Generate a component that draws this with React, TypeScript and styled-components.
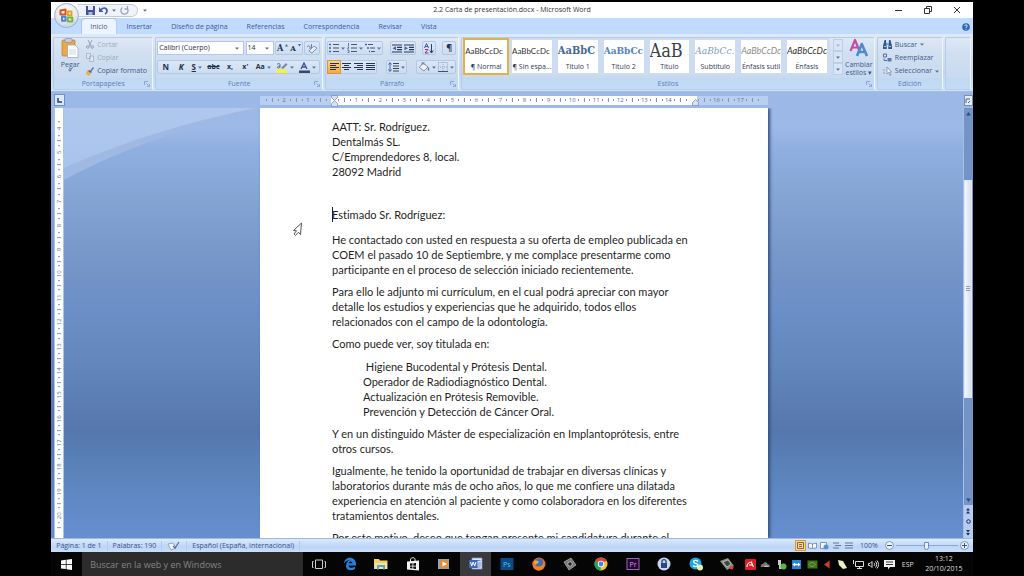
import React from 'react';
import styled, { createGlobalStyle, css } from 'styled-components';

const ui = '"Open Sans", "Noto Sans", sans-serif';
const body = 'Lato, "Open Sans", sans-serif';
const serif = '"DejaVu Serif Condensed", "DejaVu Serif", serif';

const Global = createGlobalStyle`
  * { box-sizing: border-box; }
  body { margin: 0; background: #000; font-family: ${ui}; }
  button, input, select { font: inherit; color: inherit; margin: 0; padding: 0; border: 0; background: none; }
  svg { display: block; flex: none; }
`;

const Desktop = styled.div`
  height: 100vh;
  padding: 2px 5% 0;
  display: flex;
  flex-direction: column;
  background: #000;
  overflow: hidden;
`;

const WordWindow = styled.main`
  position: relative;
  flex: 1;
  min-height: 0;
  display: flex;
  flex-direction: column;
  background: #bdd6fa;
  font-size: 7px;
  line-height: 10px;
  white-space: nowrap;
`;

/* ---------- title bar ---------- */
const TitleBar = styled.header`
  height: 16px;
  display: grid;
  grid-template-columns: 1fr auto 1fr;
  align-items: center;
  background: #fff;
  color: #333;
`;
const QuickAccess = styled.div`
  display: flex;
  align-items: center;
  padding-left: 26px;
  gap: 5px;
`;
const Pill = styled.div`
  display: flex;
  align-items: center;
  gap: 4px;
  height: 13px;
  padding: 0 8px;
  border: 1px solid #c3cbd8;
  border-left-color: #fff;
  border-radius: 0 7px 7px 0;
  background: #f0f4fa;
`;
const Plain = styled.button`
  display: flex;
  align-items: center;
  justify-content: center;
`;
const WindowTitle = styled.h1`
  margin: 0;
  font-size: 7px;
  font-weight: 400;
`;
const WindowButtons = styled.div`
  display: flex;
  justify-content: flex-end;
  align-items: center;
  gap: 21px;
  padding-right: 12px;
`;
const OfficeButton = styled.button`
  position: absolute;
  left: 3px;
  top: 1px;
  width: 25px;
  height: 25px;
  display: flex;
  align-items: center;
  justify-content: center;
  border: 1px solid #9fb0c9;
  border-radius: 50%;
  background: radial-gradient(circle at 50% 30%, #fff 0, #e6ebf3 50%, #b7c4d8 100%);
  z-index: 2;
`;

/* ---------- ribbon ---------- */
const TabBar = styled.nav`
  height: 16px;
  display: flex;
  align-items: flex-end;
  gap: 3px;
  padding: 0 3px 0 31px;
  background: #bfdbff;
`;
const Tab = styled.button<{ $active?: boolean }>`
  height: 15px;
  padding: 0 8px;
  color: #3e5c8f;
  border-radius: 3px 3px 0 0;
  ${p => p.$active && css`
    background: #eef4fd;
    box-shadow: 0 0 0 1px #a5c2ea;
    clip-path: inset(-1px -1px 0 -1px);
  `}
`;
const HelpButton = styled(Plain)`
  margin-left: auto;
  height: 15px;
`;
const Ribbon = styled.section`
  height: 58px;
  display: flex;
  gap: 2px;
  padding: 3px 2px 1px 2px;
  background: linear-gradient(#dfe9f7 0, #d2e1f4 30%, #c3d8f1 70%, #cfe3fa 100%);
  border-bottom: 1px solid #9fbfdc;
`;
const Group = styled.section<{ $w?: number }>`
  display: flex;
  flex-direction: column;
  ${p => (p.$w ? css`flex: 0 0 ${p.$w}px;` : css`flex: 1;`)}
  min-width: 0;
  border: 1px solid #b5cbe8;
  border-right-color: #eef5fd;
  border-radius: 2px;
  background: linear-gradient(#dee8f5 0, #d1dff1 30%, #c8daf0 78%, #c1d8f1 79%, #c3dcf8 100%);
`;
const GroupBody = styled.div`
  flex: 1;
  display: flex;
  min-height: 0;
`;
const GroupLabel = styled.footer`
  height: 11px;
  display: grid;
  grid-template-columns: 8px 1fr 8px;
  align-items: center;
  text-align: center;
  color: #5c7fb5;
`;
const BigButton = styled.button<{ $w: number }>`
  width: ${p => p.$w}px;
  display: flex;
  flex-direction: column;
  align-items: center;
  color: #3b5a8c;
  line-height: 8px;
  svg:first-child { margin-bottom: 3px; }
`;
const CommandList = styled.div<{ $pad?: number }>`
  display: flex;
  flex-direction: column;
  padding-left: ${p => p.$pad || 0}px;
`;
const Command = styled.button<{ $off?: boolean }>`
  height: 14px;
  display: flex;
  align-items: center;
  gap: 3px;
  color: ${p => (p.$off ? '#9fabbd' : '#3b5a8c')};
`;
const ToolRows = styled.div`
  flex: 1;
  display: flex;
  flex-direction: column;
  gap: 5px;
  padding: 3px 2px 0 1px;
`;
const ToolRow = styled.div`
  display: flex;
  justify-content: space-between;
  height: 14px;
`;
const Cluster = styled.div<{ $grow?: boolean }>`
  ${p => p.$grow && 'flex: 1;'}
  display: flex;
  align-items: stretch;
  justify-content: space-around;
  border: 1px solid #b3c8e6;
  border-radius: 2px;
  background: linear-gradient(#dce7f6, #cbdcf2);
`;
const Tool = styled.button<{ $on?: boolean }>`
  min-width: 12px;
  padding: 0 1px;
  display: flex;
  align-items: center;
  justify-content: center;
  gap: 2px;
  color: #25324a;
  ${p => p.$on && 'background: linear-gradient(#fcd28a, #f8a93c); box-shadow: 0 0 0 1px #d09a4c;'}
`;
const Glyph = styled.span<{ $b?: boolean; $i?: boolean; $u?: boolean; $s?: boolean; $serif?: boolean; $size?: number }>`
  font-family: ${p => (p.$serif ? serif : ui)};
  font-size: ${p => p.$size || 8}px;
  font-weight: ${p => (p.$b ? 700 : 400)};
  font-style: ${p => (p.$i ? 'italic' : 'normal')};
  text-decoration: ${p => (p.$u ? 'underline' : p.$s ? 'line-through' : 'none')};
`;
const Combo = styled.label<{ $w: number }>`
  width: ${p => p.$w}px;
  display: flex;
  align-items: center;
  padding: 0 4px 0 1px;
  background: #fbfdff;
  border: 1px solid #b3c8e6;
  color: #333;
`;
const Select = styled.select`
  appearance: none;
  flex: 1;
  min-width: 0;
  height: 12px;
  outline: 0;
`;

const Gallery = styled.div`
  flex: 1;
  display: grid;
  grid-template-columns: repeat(8, 1fr);
  padding: 0 0 0 1px;
  min-width: 0;
`;
const StyleCard = styled.button<{ $on?: boolean }>`
  display: flex;
  flex-direction: column;
  align-items: center;
  height: 37px;
  min-width: 0;
  overflow: hidden;
  background: #fff;
  color: #333a55;
  border: 2px solid ${p => (p.$on ? '#e4b04a' : '#cddcf1')};
  border-left-width: ${p => (p.$on ? 2 : 3)}px;
  border-right-width: ${p => (p.$on ? 2 : 3)}px;
`;
const Sample = styled.span<{ $font?: string; $size: number; $color?: string; $b?: boolean; $i?: boolean }>`
  display: flex;
  align-items: center;
  align-self: stretch;
  height: 22px;
  overflow: hidden;
  font-family: ${p => p.$font || body};
  font-size: ${p => p.$size}px;
  color: ${p => p.$color || '#333'};
  font-weight: ${p => (p.$b ? 700 : 400)};
  font-style: ${p => (p.$i ? 'italic' : 'normal')};
`;
const GalleryScroll = styled.div`
  width: 10px;
  margin: 1px 1px 0 3px;
  display: grid;
  grid-template-rows: repeat(3, 12px);
`;
const ScrollStep = styled(Plain)`
  border: 1px solid #bccfea;
  background: #d9e5f5;
`;

/* ---------- workspace ---------- */
const Workspace = styled.section`
  position: relative;
  flex: 1;
  min-height: 0;
  display: grid;
  grid-template-columns: 14px 1fr 10px;
  grid-template-rows: 16px 1fr;
  background: linear-gradient(#9bb8e6 0, #9db9e7 8%, #8fafe0 13%, #83a3d3 25%, #7493c6 41%, #6e91c9 46%, #6285bc 62%, #5577ae 76%, #5b83ba 85%, #678fd0 100%);
  overflow: hidden;
`;
const Swoosh = styled.svg`
  position: absolute;
  left: 13px;
  top: 16px;
`;
const TabSelector = styled(Plain)`
  margin: 2px 0 2px 3px;
  width: 11px;
  border: 1px solid #6d92cf;
  background: #dce9fb;
`;
const RulerTrack = styled.div`
  display: flex;
  justify-content: center;
  align-items: center;
`;
const Ruler = styled.div`
  position: relative;
  width: 508px;
  height: 9px;
  display: flex;
  padding-left: 3px;
  background: linear-gradient(90deg, #b9cff2 14%, #fff 14%, #fff 86%, #b9cff2 86%);
  color: #5a6f93;
  font-size: 6px;
  line-height: 9px;
`;
const RulerCell = styled.div`
  flex: 1;
  min-width: 0;
  display: grid;
  grid-template-columns: repeat(4, 1fr);
  justify-items: center;
  align-items: center;
`;
const Mark = styled.i<{ $long?: boolean }>`
  width: 1px;
  height: ${p => (p.$long ? 4 : 2)}px;
  background: #8396b8;
`;
const Indent = styled.svg<{ $right?: boolean }>`
  position: absolute;
  top: ${p => (p.$right ? 3 : -1)}px;
  left: ${p => (p.$right ? '85%' : '14%')};
`;
const SideRuler = styled.div`
  margin: 0 1px 0 3px;
  padding: 9px 0 10px;
  display: flex;
  flex-direction: column;
  background: #fff;
  border-left: 1px solid #a9c3ec;
  border-right: 1px solid #a9c3ec;
  color: #5a6f93;
  font-size: 6px;
  z-index: 1;
`;
const SideCell = styled.div`
  flex: 1;
  min-height: 0;
  display: flex;
  align-items: center;
  justify-content: space-between;
  writing-mode: vertical-rl;
  transform: rotate(180deg);
`;
const SideMark = styled.i<{ $long?: boolean }>`
  width: ${p => (p.$long ? 4 : 2)}px;
  height: 1px;
  background: #8396b8;
`;
const PageArea = styled.div`
  display: flex;
  justify-content: center;
  min-height: 0;
  overflow: hidden;
  z-index: 1;
`;
const Page = styled.article`
  width: 508px;
  max-width: 100%;
  padding: 11px 60px 0 72px;
  background: #fff;
  box-shadow: 2px 0 3px #33507f;
  color: #1f1f1f;
  font-family: ${body};
  font-size: 11px;
  font-variant-ligatures: none;
  line-height: 15px;
`;
const Para = styled.p<{ $gap?: number; $indent?: boolean }>`
  margin: 0 0 ${p => p.$gap || 7}px;
  padding-left: ${p => (p.$indent ? 31 : 0)}px;
`;
const Caret = styled.i`
  position: absolute;
  width: 1px;
  height: 15px;
  background: #102040;
`;
const Pointer = styled.svg`
  position: absolute;
  left: 241px;
  top: 130px;
  z-index: 2;
`;
const ScrollHead = styled(Plain)`
  margin: 3px 0 2px 1px;
  background: #e4ecf9;
  border: 1px solid #7b8fb3;
`;
const ScrollBar = styled.div`
  display: flex;
  flex-direction: column;
  border-left: 1px solid #a3bfeb;
  background: #7494c6;
  z-index: 1;
`;
const ScrollButton = styled(Plain)<{ $light?: boolean }>`
  height: 11px;
  ${p => p.$light && 'background: #b6cdf0;'}
`;
const Thumb = styled.div`
  flex: 217;
  margin: 0 1px 0 0;
  display: flex;
  align-items: center;
  justify-content: center;
  background: linear-gradient(90deg, #f4f6fb, #d7dfec);
  border: 1px solid #dfe7f3;
`;
const Track = styled.div<{ $flex: number }>`
  flex: ${p => p.$flex};
`;

/* ---------- status bar ---------- */
const StatusBar = styled.footer`
  height: 14px;
  display: flex;
  align-items: center;
  padding: 0 2px 0 5px;
  color: #35548a;
  border-top: 1px solid #9db9de;
  background: linear-gradient(#dbe9fc, #bdd5f6 60%, #c9defa);
`;
const StatusItem = styled.span`
  padding-right: 5px;
  margin-right: 5px;
  border-right: 1px solid #b4cbec;
`;
const ViewButtons = styled.div`
  margin-left: auto;
  display: flex;
  gap: 1px;
  padding-right: 6px;
`;
const ViewButton = styled(Plain)<{ $on?: boolean }>`
  width: 11px;
  height: 11px;
  ${p => p.$on && 'background: #fbd491; box-shadow: inset 0 0 0 1px #d49b45;'}
`;
const ZoomLabel = styled.span`
  padding-right: 5px;
`;
const Zoom = styled.input`
  appearance: none;
  width: 62px;
  height: 9px;
  background: linear-gradient(#0000 4px, #8fa9d0 4px, #8fa9d0 5px, #0000 5px);
  &::-webkit-slider-thumb {
    appearance: none;
    width: 5px;
    height: 8px;
    background: #e9f1fc;
    border: 1px solid #6e8cbc;
    border-radius: 0 0 3px 3px;
  }
`;
const RoundButton = styled(Plain)`
  width: 9px;
  height: 9px;
  margin: 0 2px;
  border-radius: 50%;
  border: 1px solid #7b97c4;
  background: #edf4fd;
`;

/* ---------- taskbar ---------- */
const TaskBar = styled.footer`
  height: 24px;
  display: flex;
  background: #050505;
  color: #ddd;
  white-space: nowrap;
`;
const Start = styled(Plain)`
  width: 31px;
`;
const Search = styled.input`
  flex: 1;
  min-width: 0;
  padding: 0 8px;
  background: #2c2c2c;
  font-size: 9px;
  outline: 0;
  &::placeholder { color: #858585; }
`;
const Apps = styled.div`
  width: 440px;
  display: grid;
  grid-template-columns: repeat(14, 1fr);
`;
const TaskButton = styled(Plain)<{ $on?: boolean }>`
  background: ${p => (p.$on ? '#3a3a3d' : 'none')};
`;
const Tray = styled.div`
  width: 154px;
  display: grid;
  grid-template-columns: repeat(10, 1fr);
`;
const Lang = styled(Plain)`
  width: 22px;
  font-size: 7px;
`;
const Clock = styled.time`
  width: 54px;
  padding: 2px 4px 0 0;
  text-align: center;
  font-size: 7px;
  line-height: 10px;
`;

/* ---------- drawings ---------- */
const Down = ({ c = '#5b7299' }: { c?: string }) => (
  <svg width="4" height="3" viewBox="0 0 4 3"><path d="M0 .5h4L2 2.7z" fill={c} /></svg>
);
const Launcher = () => (
  <svg width="6" height="6" viewBox="0 0 6 6" fill="none" stroke="#7f9cc8"><path d="M.5 4V.5H4M2.5 2.5l2 2M5.5 3v2.5H3" strokeWidth=".8" /></svg>
);
const Lines = ({ kind = 'left' }: { kind?: 'left' | 'center' | 'right' | 'full' }) => {
  const d = {
    left: 'M0 .5h9M0 2.500h6M0 4.500h9M0 6.500h6',
    center: 'M0 .5h9M2 2.500h5M0 4.500h9M2 6.500h5',
    right: 'M0 .5h9M3 2.500h6M0 4.500h9M3 6.500h6',
    full: 'M0 .5h9M0 2.500h9M0 4.500h9M0 6.500h9',
  }[kind];
  return <svg width="9" height="8" viewBox="0 0 9 8"><path d={d} stroke="#27324c" strokeWidth="1.2" /></svg>;
};
const ListIcon = ({ kind }: { kind: 'dots' | 'nums' | 'levels' }) => (
  <svg width="10" height="10" viewBox="0 0 10 10" fill="none">
    <path d={kind === 'levels' ? 'M3 1.5h5M5 5h5M6 8.5h4' : 'M4 1.5h6M4 5h6M4 8.5h6'} stroke="#4a556e" />
    <path
      d={kind === 'levels' ? 'M0 1.5h2M2 5h2M4 8.5h1' : kind === 'dots' ? 'M0 1.5h2M0 5h2M0 8.5h2' : 'M1.5 0v3M.5 4h1.5L.5 6H2M.5 7.5H2v2H.5'}
      stroke="#3e64a8"
      strokeWidth={kind === 'nums' ? 0.8 : 1.6}
    />
  </svg>
);
const IndentIcon = ({ out }: { out?: boolean }) => (
  <svg width="10" height="9" viewBox="0 0 10 9">
    <path d="M0 1h10M5 3.3h5M5 5.6h5M0 8h10" stroke="#2c3850" strokeWidth="1.2" />
    <path d={out ? 'M4 2.3v4L.5 4.3z' : 'M.5 2.3v4L4 4.3z'} fill="#3e64a8" />
  </svg>
);

const PasteIcon = () => (
  <svg width="18" height="20" viewBox="0 0 18 20">
    <rect x="1" y="2" width="13" height="16" rx="1" fill="#e9a948" stroke="#b97f2c" strokeWidth=".7" />
    <rect x="4" y=".5" width="7" height="4" rx="1" fill="#c7cdd8" stroke="#7d8798" strokeWidth=".6" />
    <path d="M6.500 7h7.500l3 3v9.500H6.500z" fill="#fff" stroke="#8fa3c2" strokeWidth=".7" />
    <path d="M8 12h7M8 14h7M8 16h7" stroke="#b7c6dd" strokeWidth=".7" />
  </svg>
);
const CutIcon = () => (
  <svg width="8" height="9" viewBox="0 0 8 9" fill="none" stroke="#98a4b6"><path d="M2 0l3 6M6 0L3 6" /><circle cx="1.800" cy="7" r="1.300" /><circle cx="6.200" cy="7" r="1.300" /></svg>
);
const CopyIcon = () => (
  <svg width="8" height="9" viewBox="0 0 8 9" fill="#dfe6f0" stroke="#a3afc1" strokeWidth=".8"><path d="M.5.5h4v5h-4zM3.500 3h4v5.500h-4z" /></svg>
);
const BrushIcon = () => (
  <svg width="8" height="9" viewBox="0 0 8 9"><path d="M7 0L8 1 5 5 4 4z" fill="#4f76b8" /><path d="M1 3l4 3-2 3-3-2z" fill="#e9b13e" /><path d="M3 3l3 2-1 1-3-2z" fill="#555f74" /></svg>
);
const HighlightIcon = () => (
  <svg width="12" height="11" viewBox="0 0 12 11"><path d="M0 7.500h11V11H0z" fill="#f7f431" /><path d="M5 6l5-5 1.500 1.500L7 7z" fill="#7c8796" /><path d="M1 2.500c1-1.500 3-1 3 0v3M4 4c-3 0-3.500 2-1.500 2L4 5" stroke="#3e4f70" fill="none" strokeWidth=".8" /></svg>
);
const FontColorIcon = () => (
  <svg width="11" height="11" viewBox="0 0 11 11"><path d="M2 7l3-6 3 6M3.500 5h4" stroke="#3a5488" strokeWidth="1.300" fill="none" /><path d="M0 8.500h11V11H0z" fill="#34496f" /></svg>
);
const ClearIcon = () => (
  <svg width="12" height="11" viewBox="0 0 12 11"><path d="M3 8l5-5 3 2-5 5z" fill="#e8edf6" stroke="#6d7c97" strokeWidth=".8" /><path d="M1 4c1-2 3-1 3 0v2M5.500 1v4" stroke="#53648a" fill="none" strokeWidth=".8" /></svg>
);
const SortIcon = () => (
  <svg width="10" height="11" viewBox="0 0 10 11" fill="none"><path d="M.5 5l2-4.500 2 4.500M1.200 3.500h2.600" stroke="#3a5ba0" /><path d="M1 6.500h3l-3 3.500h3.500" stroke="#8a3f77" /><path d="M7.500 1v8.500M5.800 7.500l1.700 2.500 1.700-2.500" stroke="#333f59" /></svg>
);
const SpacingIcon = () => (
  <svg width="11" height="10" viewBox="0 0 11 10"><path d="M5 1.500h6M5 4h6M5 6.500h6M5 9h6" stroke="#39445c" /><path d="M2 1v8M.5 2.500L2 .5l1.500 2M.5 7.500L2 9.500l1.500-2" stroke="#3e64a8" fill="none" /></svg>
);
const BucketIcon = () => (
  <svg width="12" height="11" viewBox="0 0 12 11"><path d="M5 1l5 4-4 4-4.500-3.500z" fill="#eef2f8" stroke="#6b7993" strokeWidth=".8" /><path d="M10 5c2 1 1 4 .5 4S9.500 7 10 5z" fill="#5874a6" /><path d="M4 3V0h2v3" fill="none" stroke="#6b7993" strokeWidth=".7" /></svg>
);
const BorderIcon = () => (
  <svg width="10" height="10" viewBox="0 0 10 10" fill="none"><path d="M.5.5h9v9M.5.500v9M5 0v9M0 5h10" stroke="#97a7c2" strokeDasharray="1 1" /><path d="M0 9.500h10" stroke="#44516c" /></svg>
);
const ChangeStylesIcon = () => (
  <svg width="20" height="20" viewBox="0 0 20 20" fill="none" strokeLinejoin="round"><path d="M1.500 13L6 2l4.500 11M3 9.500h6" stroke="#c34da3" strokeWidth="2.200" /><path d="M8 18l4.800-12L18 18M10 14h6.500" stroke="#4d8bcc" strokeWidth="2.600" /></svg>
);
const FindIcon = () => (
  <svg width="9" height="9" viewBox="0 0 9 9"><path d="M1.500 0h1.500L3.800 9H0V6zM6 0h1.500L9 6v3H5.200z" fill="#31588f" /><path d="M3.500 4h2" stroke="#31588f" /><path d="M1 6.500h2M6 6.500h2" stroke="#a9c3e8" /></svg>
);
const ReplaceIcon = () => (
  <svg width="9" height="9" viewBox="0 0 9 9" fill="none"><path d="M.5 4V1h3v3zM1 5.500v2h3" stroke="#5c7199" /><path d="M4.500 5h4v3.500h-4z" fill="#587ab3" /></svg>
);
const SelectIcon = () => (
  <svg width="9" height="9" viewBox="0 0 9 9"><path d="M4 0v7l1.500-1.500L7 8.500l1-.5-1.500-3H8.500z" fill="#fff" stroke="#6b7e9f" strokeWidth=".7" /><path d="M0 3h2M0 6h2" stroke="#8a9dbe" /></svg>
);
const OfficeLogo = () => (
  <svg width="15" height="15" viewBox="0 0 15 15" fill="none" strokeWidth="2" strokeLinejoin="round">
    <path d="M1.500 2.500l5-1v5h-5z" stroke="#d9531e" /><path d="M8.800 3.500h3.700v3.700H8.800z" stroke="#eaa21f" />
    <path d="M3 8.800h3.500v4H3z" stroke="#4b86ce" /><path d="M8.800 9.500h4.500v4H8.800z" stroke="#7ab339" />
  </svg>
);
const SaveIcon = () => (
  <svg width="9" height="9" viewBox="0 0 9 9"><path d="M0 0h9v9H0z" fill="#4450a0" /><path d="M2 0h5v4H2z" fill="#e4e9f6" /><path d="M2.500 6h4v3h-4z" fill="#aeb8dc" /></svg>
);
const UndoIcon = () => (
  <svg width="9" height="9" viewBox="0 0 9 9"><path d="M2 4c2-3 6-2.500 6 1 0 1.500-1 2.500-2 3" stroke="#4159b8" strokeWidth="1.700" fill="none" /><path d="M0 1v5h4.500z" fill="#4159b8" /></svg>
);
const RedoIcon = () => (
  <svg width="9" height="9" viewBox="0 0 9 9" fill="none" stroke="#94a3bd" strokeWidth="1.300"><path d="M2.500 1.500A3.600 3.600 0 1 0 7 2M7.500 0v3H4.500" /></svg>
);
const WinLogo = () => (
  <svg width="11" height="11" viewBox="0 0 11 11" fill="#fff"><path d="M0 1.500L4.800.800v4.300H0zM5.500.7L11 0v5.100H5.500zM0 5.800h4.800v4.300L0 9.400zM5.500 5.800H11v5.200l-5.500-.800z" /></svg>
);

const t = { width: 14, height: 14, viewBox: '0 0 14 14' };
const taskIcons: [string, React.ReactNode][] = [
  ['Vista de tareas', <svg {...t} fill="none" stroke="#ccc"><path d="M3.500 3h7v8.500h-7zM1.500 4.500h-1v6h1M12.500 4.500h1v6h-1" /></svg>],
  ['Edge', <svg {...t}><path d="M3 9.500C3 13 8 14.500 12 12V9.700C9 11.500 5.700 11 5.600 8.500H13C13.500 3.500 10.500.800 7 .800 3.500.800 1 3.500 1 6.500 2.500 4 5 3 6.500 3.300c-2 .8-3.500 3-3.500 6.200zM5.800 6.300C6 4 9.300 4 9.500 6.300z" fill="#2581dc" /></svg>],
  ['Explorador', <svg {...t}><path d="M0 2h5l1 1.500h7.500V12H0z" fill="#efd06c" /><path d="M1 6h12v6H1z" fill="#f7e49a" /><path d="M3 8h8v4.500H9V10H5v2.500H3z" fill="#4fa6d8" /></svg>],
  ['Tienda', <svg {...t}><path d="M1 4.500l12-1v10L1 12.500z" fill="#f2f2f2" /><path d="M4.500 5V2.500C5 0 9 0 9 2.500V5" fill="none" stroke="#f2f2f2" /><path d="M4 6.500l2.500-.3v2.500H4zM7.300 6.200L10 6v2.700H7.300zM4 9.400h2.500v2.200L4 11.300zM7.300 9.400H10V12l-2.700-.3z" fill="#111" /></svg>],
  ['Reproductor', <svg {...t}><rect x="1" y="2" width="11" height="10" fill="#8ca6bf" /><circle cx="7" cy="7" r="4.500" fill="#ea8a32" /><path d="M5.500 4.500L10 7l-4.500 2.500z" fill="#fff" /></svg>],
  ['Word', <svg {...t}><path d="M3 1h10v11H3z" fill="#dfe8f7" stroke="#7d9bd0" strokeWidth=".8" /><path d="M6 3.500h5.500M9 6h3M9 8h3M6 10h5.500" stroke="#6f8fc6" /><rect x="0" y="3" width="8.500" height="8" fill="#4067b4" /><path d="M1.500 5l1.200 4 1.500-4 1.500 4L7 5" stroke="#fff" fill="none" /></svg>],
  ['Photoshop', <svg {...t}><rect x=".5" y="1" width="13" height="12" fill="#0b4a82" /><text x="3" y="10" fontSize="7" fill="#58c1f5" fontFamily="Open Sans">Ps</text></svg>],
  ['Firefox', <svg {...t}><circle cx="7" cy="7" r="6.500" fill="#e8681c" /><circle cx="7" cy="5.500" r="4" fill="#3a6fc0" /><path d="M1 4c0 5 5 7 8 5 2-1 3-3 2.500-5.500C14 7 12.500 13.500 7 13.500S-.5 8 1 4z" fill="#ee8424" /><path d="M2 4c2-1 4 0 5 1-1 2-3 1-3 3-2-1-2-2-2-4z" fill="#f3a83a" /></svg>],
  ['Edición de vídeo', <svg {...t}><path d="M1 5l7-4 5 7-7 5z" fill="#777a74" stroke="#bbb" strokeWidth=".7" /><circle cx="7" cy="7" r="2.200" fill="#222" stroke="#ddd" strokeWidth=".7" /></svg>],
  ['Chrome', <svg {...t}><circle cx="7" cy="7" r="6.500" fill="#f2c530" /><path d="M7 7L1.400 3.700A6.500 6.500 0 0 1 12.600 3.700z" fill="#dc4437" /><path d="M7 7L1.400 3.700A6.500 6.500 0 0 0 6.500 13.500z" fill="#1fa05c" /><circle cx="7" cy="7" r="3.200" fill="#fff" /><circle cx="7" cy="7" r="2.400" fill="#4384f0" /></svg>],
  ['Premiere', <svg {...t}><rect x="1" y="1.500" width="12" height="11" fill="#26072f" stroke="#9a62b8" /><text x="3.500" y="10" fontSize="7" fill="#d69cf2" fontFamily="Open Sans">Pr</text></svg>],
  ['Seguridad', <svg {...t}><circle cx="7" cy="7" r="6.500" fill="#cdd7ea" /><rect x="4" y="6" width="6" height="5" fill="#26468d" /><path d="M5 6V4.500c0-2.500 4-2.500 4 0V6" fill="none" stroke="#26468d" strokeWidth="1.300" /></svg>],
  ['Skype', <svg {...t}><circle cx="6.500" cy="6.500" r="6" fill="#18a7e3" /><path d="M9 4.500C8 3 4.500 3 4.500 4.800c0 2 4.500 1.200 4.500 3.300C9 10 5 10 4 8.500" stroke="#fff" strokeWidth="1.400" fill="none" /><circle cx="11" cy="10.500" r="3" fill="#d9f4b0" /></svg>],
  ['Captura', <svg {...t}><path d="M0 4l8-3 6 8-7 4z" fill="#8d938a" /><path d="M3 5l5-2 3 4-4 3z" fill="#3b4a3c" stroke="#ddd" strokeWidth=".6" /><circle cx="11.500" cy="10.500" r="2" fill="#d2483b" /></svg>],
];
const s = { width: 11, height: 11, viewBox: '0 0 11 11' };
const trayIcons: [string, React.ReactNode][] = [
  ['Antivirus', <svg {...s}><rect width="11" height="11" rx="1" fill="#d81f2a" /><path d="M2 8c0-3 2-5 4.500-5M6 2.500L8.500 8M4 6h4" stroke="#fff" fill="none" strokeWidth="1.200" /></svg>],
  ['Nube', <svg {...s}><path d="M1 8C0 6 2 5 3 5c1-2.500 4-2 4.500 0C10 5 10.500 8 9 8z" fill="#777" /><path d="M4 8c0-2 4-2 5 0z" fill="#bbb" /></svg>],
  ['Expulsar', <svg {...s}><path d="M2 1h3v5H2zM3 6h4v4H3z" fill="#c8cdc8" /><circle cx="7.500" cy="7.500" r="3" fill="#57b847" /></svg>],
  ['Remoto', <svg {...s}><rect x="1" y="1" width="9" height="9" fill="#2385d8" /><path d="M1.500 5.500L4 3.500v1.300h3V3.500l2.500 2L7 7.500V6.200H4v1.300z" fill="#fff" /></svg>],
  ['Gráficos', <svg {...s}><rect x=".5" y="1.500" width="10" height="8" fill="#43701c" /><path d="M2 5.500c2-3 5-2 6.500 0-2 2.500-5 2.500-6.500 0z" fill="none" stroke="#7fb13d" /></svg>],
  ['Audio', <svg {...s}><path d="M2 5.500L7 2v7z" fill="#c9402b" /><path d="M7.500 1.500v8" stroke="#7c2a1c" /></svg>],
  ['Notas', <svg {...s}><path d="M1 1l5 1 4 7-4 1-4-4z" fill="#eaf0c4" /></svg>],
  ['Red', <svg {...s} fill="none" stroke="#ddd"><path d="M2.500 2.500h8v5h-8zM6.500 7.500v2M4 9.500h5M.5 1v4" /></svg>],
  ['Volumen', <svg {...s} fill="none" stroke="#ddd"><path d="M.5 4.500v2h1.500l2 2v-6l-2 2zM6 4c.8 1 .8 2 0 3M7.500 2.500c1.500 2 1.500 4 0 6M9 1.500c2 2.500 2 5.500 0 8" /></svg>],
  ['Notificaciones', <svg {...s}><path d="M0 1h11v7H6L4 10.500V8H0z" fill="#f2f2f2" /><path d="M2 3h7M2 5.500h7" stroke="#333" /></svg>],
];

const styleCards: { name: string; text: string; size: number; color?: string; b?: boolean; i?: boolean; font?: string }[] = [
  { name: '¶ Normal', text: 'AaBbCcDc', size: 8 },
  { name: '¶ Sin espa...', text: 'AaBbCcDc', size: 8 },
  { name: 'Título 1', text: 'AaBbC', size: 11, color: '#44698f', b: true, font: serif },
  { name: 'Título 2', text: 'AaBbCc', size: 10, color: '#5583b3', b: true, font: serif },
  { name: 'Título', text: 'AaB', size: 18, color: '#3c4049', font: serif },
  { name: 'Subtítulo', text: 'AaBbCc.', size: 10, color: '#7e9cc2', i: true, font: serif },
  { name: 'Énfasis sutil', text: 'AaBbCcDc', size: 9, color: '#8e8e8e', i: true },
  { name: 'Énfasis', text: 'AaBbCcDc', size: 9, i: true },
];
const rulerNumbers = ['2', '1', '', '1', '2', '3', '4', '5', '6', '7', '8', '9', '10', '11', '12', '13', '14', '', '16', '17', ''];
const sideNumbers = Array.from({ length: 17 }, (_, i) => i + 4);

const paragraphs: { lines: string[]; gap?: number; indent?: boolean; caret?: boolean }[] = [
  { lines: ['AATT: Sr. Rodríguez.', 'Dentalmás SL.', 'C/Emprendedores 8, local.', '28092 Madrid'], gap: 28 },
  { lines: ['Estimado Sr. Rodríguez:'], gap: 10, caret: true },
  { lines: ['He contactado con usted en respuesta a su oferta de empleo publicada en', 'COEM el pasado 10 de Septiembre, y me complace presentarme como', 'participante en el proceso de selección iniciado recientemente.'] },
  { lines: ['Para ello le adjunto mi currículum, en el cual podrá apreciar con mayor', 'detalle los estudios y experiencias que he adquirido, todos ellos', 'relacionados con el campo de la odontología.'] },
  { lines: ['Como puede ver, soy titulada en:'], gap: 8 },
  { lines: ['\u00a0Higiene Bucodental y Prótesis Dental.', 'Operador de Radiodiagnóstico Dental.', 'Actualización en Prótesis Removible.', 'Prevención y Detección de Cáncer Oral.'], indent: true },
  { lines: ['Y en un distinguido Máster de especialización en Implantoprótesis, entre', 'otros cursos.'] },
  { lines: ['Igualmente, he tenido la oportunidad de trabajar en diversas clínicas y', 'laboratorios durante más de ocho años, lo que me confiere una dilatada', 'experiencia en atención al paciente y como colaboradora en los diferentes', 'tratamientos dentales.'] },
  { lines: ['Por este motivo, deseo que tengan presente mi candidatura durante el'] },
];

const Label = ({ children, plain }: { children: React.ReactNode; plain?: boolean }) => (
  <GroupLabel><span /><span>{children}</span>{plain ? <span /> : <Launcher />}</GroupLabel>
);

export default function App() {
  return (
    <Desktop>
      <Global />
      <WordWindow>
        <OfficeButton aria-label="Botón de Office"><OfficeLogo /></OfficeButton>
        <TitleBar>
          <QuickAccess>
            <Pill>
              <Plain aria-label="Guardar"><SaveIcon /></Plain>
              <Plain aria-label="Deshacer"><UndoIcon /></Plain>
              <Down />
              <Plain aria-label="Rehacer"><RedoIcon /></Plain>
            </Pill>
            <Down />
          </QuickAccess>
          <WindowTitle>2.2 Carta de presentación.docx - Microsoft Word</WindowTitle>
          <WindowButtons>
            <Plain aria-label="Minimizar"><svg width="8" height="8"><path d="M0 4.500h7" stroke="#333" /></svg></Plain>
            <Plain aria-label="Restaurar"><svg width="8" height="8" fill="none" stroke="#333"><path d="M.5 2.500h5v5h-5zM2.500 2.500v-2h5v5h-2" /></svg></Plain>
            <Plain aria-label="Cerrar"><svg width="8" height="8" stroke="#333"><path d="M1 1l6 6M7 1L1 7" /></svg></Plain>
          </WindowButtons>
        </TitleBar>

        <TabBar>
          {['Inicio', 'Insertar', 'Diseño de página', 'Referencias', 'Correspondencia', 'Revisar', 'Vista'].map((name, i) => (
            <Tab key={name} $active={i === 0}>{name}</Tab>
          ))}
          <HelpButton aria-label="Ayuda">
            <svg width="8" height="8" viewBox="0 0 8 8"><circle cx="4" cy="4" r="3.800" fill="#2f66b5" /><path d="M2.800 3c0-1.600 2.500-1.500 2.400 0C5.200 4 4 3.800 4 5M4 5.700v.9" stroke="#fff" fill="none" strokeWidth=".9" /></svg>
          </HelpButton>
        </TabBar>

        <Ribbon>
          <Group $w={100}>
            <GroupBody>
              <BigButton $w={32}><PasteIcon /><span>Pegar</span><Down /></BigButton>
              <CommandList>
                <Command $off><CutIcon />Cortar</Command>
                <Command $off><CopyIcon />Copiar</Command>
                <Command><BrushIcon />Copiar formato</Command>
              </CommandList>
            </GroupBody>
            <Label>Portapapeles</Label>
          </Group>

          <Group $w={168}>
            <GroupBody>
              <ToolRows>
                <ToolRow>
                  <Combo $w={87}><Select aria-label="Fuente"><option>Calibri (Cuerpo)</option></Select><Down /></Combo>
                  <Combo $w={28}><Select aria-label="Tamaño"><option>14</option></Select><Down /></Combo>
                  <Cluster>
                    <Tool aria-label="Agrandar"><Glyph $b $serif $size={9}>A</Glyph><svg width="3" height="8"><path d="M0 2.500h3L1.500 0z" fill="#3e64a8" /></svg></Tool>
                    <Tool aria-label="Encoger"><Glyph $b $serif $size={8}>A</Glyph><svg width="3" height="8"><path d="M0 0h3L1.500 2.500z" fill="#3e64a8" /></svg></Tool>
                  </Cluster>
                  <Cluster><Tool aria-label="Borrar formato"><ClearIcon /></Tool></Cluster>
                </ToolRow>
                <ToolRow>
                  <Cluster $grow>
                    <Tool><Glyph $b>N</Glyph></Tool>
                    <Tool><Glyph $b $i>K</Glyph></Tool>
                    <Tool><Glyph $b $u>S</Glyph><Down /></Tool>
                    <Tool><Glyph $b $s $size={7}>abc</Glyph></Tool>
                    <Tool><Glyph $b $size={7}>x,</Glyph></Tool>
                    <Tool><Glyph $b $size={7}>x'</Glyph></Tool>
                    <Tool><Glyph $b $size={7}>Aa</Glyph><Down /></Tool>
                    <Tool aria-label="Resaltado"><HighlightIcon /><Down /></Tool>
                    <Tool aria-label="Color de fuente"><FontColorIcon /><Down /></Tool>
                  </Cluster>
                </ToolRow>
              </ToolRows>
            </GroupBody>
            <Label>Fuente</Label>
          </Group>

          <Group $w={134}>
            <GroupBody>
              <ToolRows>
                <ToolRow>
                  <Cluster>
                    <Tool aria-label="Viñetas"><ListIcon kind="dots" /><Down /></Tool>
                    <Tool aria-label="Numeración"><ListIcon kind="nums" /><Down /></Tool>
                    <Tool aria-label="Lista multinivel"><ListIcon kind="levels" /><Down /></Tool>
                  </Cluster>
                  <Cluster>
                    <Tool aria-label="Disminuir sangría"><IndentIcon out /></Tool>
                    <Tool aria-label="Aumentar sangría"><IndentIcon /></Tool>
                  </Cluster>
                  <Cluster><Tool aria-label="Ordenar"><SortIcon /></Tool></Cluster>
                  <Cluster><Tool><Glyph $b $size={9}>¶</Glyph></Tool></Cluster>
                </ToolRow>
                <ToolRow>
                  <Cluster>
                    <Tool $on aria-label="Izquierda"><Lines /></Tool>
                    <Tool aria-label="Centrar"><Lines kind="center" /></Tool>
                    <Tool aria-label="Derecha"><Lines kind="right" /></Tool>
                    <Tool aria-label="Justificar"><Lines kind="full" /></Tool>
                  </Cluster>
                  <Cluster><Tool aria-label="Interlineado"><SpacingIcon /><Down /></Tool></Cluster>
                  <Cluster>
                    <Tool aria-label="Sombreado"><BucketIcon /><Down /></Tool>
                    <Tool aria-label="Bordes"><BorderIcon /><Down /></Tool>
                  </Cluster>
                </ToolRow>
              </ToolRows>
            </GroupBody>
            <Label>Párrafo</Label>
          </Group>

          <Group>
            <GroupBody>
              <Gallery>
                {styleCards.map((c, i) => (
                  <StyleCard key={c.name} $on={i === 0}>
                    <Sample $size={c.size} $color={c.color} $b={c.b} $i={c.i} $font={c.font}>{c.text}</Sample>
                    <span>{c.name}</span>
                  </StyleCard>
                ))}
              </Gallery>
              <GalleryScroll>
                <ScrollStep aria-label="Anterior"><Down c="#a5b4cc" /></ScrollStep>
                <ScrollStep aria-label="Siguiente"><Down /></ScrollStep>
                <ScrollStep aria-label="Más"><Down /></ScrollStep>
              </GalleryScroll>
              <BigButton $w={30}><ChangeStylesIcon /><span>Cambiar</span><span>estilos ▾</span></BigButton>
            </GroupBody>
            <Label>Estilos</Label>
          </Group>

          <Group $w={66}>
            <GroupBody>
              <CommandList $pad={5}>
                <Command><FindIcon />Buscar <Down /></Command>
                <Command><ReplaceIcon />Reemplazar</Command>
                <Command><SelectIcon />Seleccionar <Down /></Command>
              </CommandList>
            </GroupBody>
            <Label plain>Edición</Label>
          </Group>
          <Group $w={26} aria-hidden />
        </Ribbon>

        <Workspace>
          <Swoosh width="196" height="74" viewBox="0 0 196 74">
            <defs>
              <linearGradient id="sky" x1="0" y1="0" x2="0" y2="1">
                <stop offset="0" stopColor="#b0c8ed" />
                <stop offset="1" stopColor="#a9c3ec" />
              </linearGradient>
            </defs>
            <path d="M0 0H196V2C130 16 60 40 0 72z" fill="#a0b9e2" />
            <path d="M0 0H192C130 12 60 33 0 60z" fill="url(#sky)" />
          </Swoosh>
          <TabSelector aria-label="Tabulación"><svg width="5" height="5"><path d="M1 0v4h4" stroke="#26406f" strokeWidth="1.500" fill="none" /></svg></TabSelector>
          <RulerTrack>
            <Ruler>
              {rulerNumbers.map((n, i) => (
                <RulerCell key={i}><Mark /><Mark $long /><Mark /><span>{n}</span></RulerCell>
              ))}
              <Indent width="7" height="12" viewBox="0 0 7 12"><path d="M.5.500h6v2l-3 3-3-3zM3.500 5.500l3 3v3h-6v-3z" fill="#d5e2f6" stroke="#7d93ba" strokeWidth=".8" /></Indent>
              <Indent $right width="7" height="7" viewBox="0 0 7 7"><path d="M3.500.500l3 3v3h-6v-3z" fill="#d5e2f6" stroke="#7d93ba" strokeWidth=".8" /></Indent>
            </Ruler>
          </RulerTrack>
          <ScrollHead aria-label="Regla"><svg width="6" height="6"><path d="M1 5V1h4M3 5l2-2" stroke="#53627f" fill="none" /></svg></ScrollHead>

          <SideRuler>
            {sideNumbers.map(n => (
              <SideCell key={n}><SideMark $long /><SideMark /><span>{n}</span><SideMark /><span /></SideCell>
            ))}
          </SideRuler>
          <PageArea>
            <Page>
              {paragraphs.map((p, i) => (
                <Para key={i} $gap={p.gap} $indent={p.indent}>
                  {p.caret && <Caret />}
                  {p.lines.map((line, j) => (
                    <React.Fragment key={j}>{j > 0 && <br />}{line}</React.Fragment>
                  ))}
                </Para>
              ))}
            </Page>
          </PageArea>
          <Pointer width="12" height="15" viewBox="0 0 12 15"><path d="M9.500 1L1.500 8.500l3 .3L2 12l1.500 1.500 3-3.300 2 2.300z" fill="#fff" stroke="#555" /></Pointer>
          <ScrollBar>
            <ScrollButton aria-label="Subir"><svg width="5" height="4"><path d="M0 3.500h5L2.500 0z" fill="#31507f" /></svg></ScrollButton>
            <Track $flex={61} />
            <Thumb><svg width="4" height="5"><path d="M0 .5h4M0 2.500h4M0 4.500h4" stroke="#8d9bb3" /></svg></Thumb>
            <Track $flex={97} />
            <ScrollButton aria-label="Bajar"><svg width="5" height="4"><path d="M0 .5h5L2.500 4z" fill="#31507f" /></svg></ScrollButton>
            <ScrollButton $light aria-label="Página anterior"><svg width="4" height="6"><path d="M0 2.500h4L2 0zM0 5.500h4L2 3z" fill="#1d2f50" /></svg></ScrollButton>
            <ScrollButton $light aria-label="Examinar"><svg width="5" height="5"><circle cx="2.500" cy="2.500" r="1.800" fill="none" stroke="#1d2f50" /></svg></ScrollButton>
            <ScrollButton $light aria-label="Página siguiente"><svg width="4" height="6"><path d="M0 0h4L2 2.500zM0 3h4L2 5.500z" fill="#1d2f50" /></svg></ScrollButton>
          </ScrollBar>
        </Workspace>

        <StatusBar>
          <StatusItem>Página: 1 de 1</StatusItem>
          <StatusItem>Palabras: 190</StatusItem>
          <StatusItem as="div">
            <svg width="14" height="10" viewBox="0 0 14 10"><path d="M1 3l5-1 3 5-5 2z" fill="#f4f7fc" stroke="#8096bb" strokeWidth=".8" /><path d="M6 5l2 2 4-6" stroke="#496ca8" fill="none" strokeWidth="1.200" /></svg>
          </StatusItem>
          <StatusItem>Español (España, internacional)</StatusItem>
          <ViewButtons>
            <ViewButton $on aria-label="Diseño de impresión"><svg width="7" height="7"><path d="M.5.500h6v6h-6zM2 2.500h3M2 4.500h3" stroke="#87683b" fill="none" /></svg></ViewButton>
            <ViewButton aria-label="Lectura"><svg width="9" height="7"><path d="M.5 1l4 1 4-1v5l-4 .5-4-.5zM4.500 2v4" stroke="#8494b2" fill="#f2f5fa" /></svg></ViewButton>
            <ViewButton aria-label="Diseño web"><svg width="9" height="8"><path d="M.5.500h6v6h-6z" stroke="#8494b2" fill="#f2f5fa" /><circle cx="6" cy="5" r="2.500" fill="#5f8fca" /></svg></ViewButton>
            <ViewButton aria-label="Esquema"><svg width="8" height="7"><path d="M0 1h6M2 3.500h6M0 6h6" stroke="#66789b" /></svg></ViewButton>
            <ViewButton aria-label="Borrador"><svg width="8" height="7"><path d="M0 1h8M0 3.500h8M0 6h8" stroke="#66789b" /></svg></ViewButton>
          </ViewButtons>
          <ZoomLabel>100%</ZoomLabel>
          <RoundButton aria-label="Alejar"><svg width="5" height="5"><path d="M0 2.500h5" stroke="#35548a" /></svg></RoundButton>
          <Zoom type="range" aria-label="Zoom" min={0} max={100} defaultValue={50} />
          <RoundButton aria-label="Acercar"><svg width="5" height="5"><path d="M0 2.500h5M2.500 0v5" stroke="#35548a" /></svg></RoundButton>
        </StatusBar>
      </WordWindow>

      <TaskBar>
        <Start aria-label="Inicio"><WinLogo /></Start>
        <Search aria-label="Buscar" placeholder="Buscar en la web y en Windows" />
        <Apps>
          {taskIcons.map(([name, icon]) => <TaskButton key={name} aria-label={name} $on={name === 'Word'}>{icon}</TaskButton>)}
        </Apps>
        <Tray>
          {trayIcons.map(([name, icon]) => <Plain key={name} aria-label={name}>{icon}</Plain>)}
        </Tray>
        <Lang>ESP</Lang>
        <Clock>13:12<br />20/10/2015</Clock>
      </TaskBar>
    </Desktop>
  );
}
